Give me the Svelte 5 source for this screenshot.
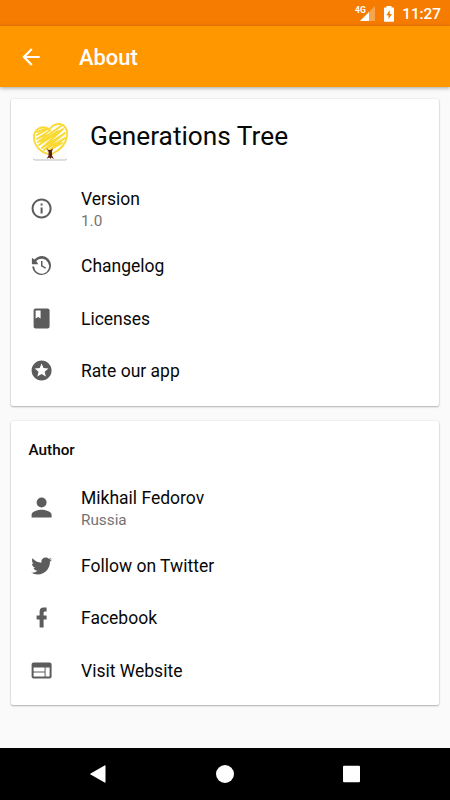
<script lang="ts">
  type Item = {
    icon: string;
    title: string;
    subtitle?: string;
  };

  const icons: Record<string, string> = {
    info: "M11 17h2v-6h-2v6zm1-15C6.48 2 2 6.48 2 12s4.48 10 10 10 10-4.48 10-10S17.52 2 12 2zm0 18c-4.41 0-8-3.59-8-8s3.59-8 8-8 8 3.59 8 8-3.59 8-8 8zM11 9h2V7h-2v2z",
    history:
      "M12.500 2.500a9.300 9.300 0 0 0-7.400 3.600L2.300 4.400v6.400h6.400L6.600 7.600a7.500 7.500 0 1 1-2.100 5.400H2.500A9.500 9.500 0 1 0 12.500 2.500zM11.400 7.500v5.300l4.300 2.500.7-1.200-3.500-2.100V7.500z",
    book: "M18 2H6c-1.1 0-2 .9-2 2v16c0 1.1.9 2 2 2h12c1.1 0 2-.9 2-2V4c0-1.1-.9-2-2-2zM6 4h5v8l-2.5-1.5L6 12V4z",
    stars:
      "M11.99 2C6.47 2 2 6.48 2 12s4.47 10 9.99 10C17.52 22 22 17.52 22 12S17.52 2 11.99 2zm4.24 16L12 15.45 7.77 18l1.12-4.81-3.73-3.23 4.92-.42L12 5l1.92 4.53 4.92.42-3.73 3.23L16.23 18z",
    person:
      "M12 12a5 5 0 1 0 0-10 5 5 0 0 0 0 10zm0 2.3c-3.4 0-10 1.7-10 5V22h20v-2.7c0-3.3-6.6-5-10-5z",
    twitter:
      "M22.46 6c-.77.35-1.6.58-2.46.69.88-.53 1.56-1.37 1.88-2.38-.83.5-1.75.85-2.72 1.05C18.37 4.5 17.26 4 16 4c-2.35 0-4.27 1.92-4.27 4.29 0 .34.04.67.11.98C8.28 9.09 5.11 7.38 3 4.79c-.37.63-.58 1.37-.58 2.15 0 1.49.75 2.81 1.91 3.56-.71 0-1.37-.2-1.95-.5v.03c0 2.08 1.48 3.82 3.44 4.21a4.22 4.22 0 0 1-1.93.07 4.28 4.28 0 0 0 4 2.98 8.521 8.521 0 0 1-5.33 1.84c-.34 0-.68-.02-1.02-.06C3.44 20.29 5.7 21 8.12 21 16 21 20.33 14.46 20.33 8.79c0-.19 0-.37-.01-.56.84-.6 1.56-1.36 2.14-2.23z",
    facebook:
      "M17 2v4h-2c-.69 0-1 .81-1 1.5V10h3v4h-3v8h-4v-8H7v-4h3V6a4 4 0 0 1 4-4h3z",
    web: "M20 4H4c-1.1 0-1.99.9-1.99 2L2 18c0 1.1.9 2 2 2h16c1.1 0 2-.9 2-2V6c0-1.1-.9-2-2-2zm-5 14H4v-4h11v4zm0-5H4V9h11v4zm5 5h-4V9h4v9z",
  };

  const appItems: Item[] = [
    { icon: "info", title: "Version", subtitle: "1.0" },
    { icon: "history", title: "Changelog" },
    { icon: "book", title: "Licenses" },
    { icon: "stars", title: "Rate our app" },
  ];

  const authorItems: Item[] = [
    { icon: "person", title: "Mikhail Fedorov", subtitle: "Russia" },
    { icon: "twitter", title: "Follow on Twitter" },
    { icon: "facebook", title: "Facebook" },
    { icon: "web", title: "Visit Website" },
  ];
</script>

{#snippet row(item: Item)}
  <div class="row" class:tall={item.subtitle}>
    <svg class="row-icon" viewBox="0.4 0.5 24 24" aria-hidden="true">
      <path d={icons[item.icon]} />
    </svg>
    <div class="row-text">
      <div class="row-title">{item.title}</div>
      {#if item.subtitle}
        <div class="row-subtitle">{item.subtitle}</div>
      {/if}
    </div>
  </div>
{/snippet}

<div class="screen">
  <div class="status-bar">
    <svg class="signal" viewBox="0 0 22 18" aria-hidden="true">
      <path d="M21 1v15H6z" fill="#fff" fill-opacity="0.3" />
      <path d="M15 7v9H6z" fill="#fff" />
      <text x="1" y="7.500">4G</text>
    </svg>
    <svg class="battery" viewBox="0 0 12 16" aria-hidden="true">
      <path d="M3.500 0h5v1.500h1.500c.6 0 1 .4 1 1v12.300c0 .6-.4 1-1 1H2c-.6 0-1-.4-1-1V2.500c0-.6.4-1 1-1h1.500z" fill="#fff" />
      <path d="M6.700 4 3.300 9.300h2.200v4l3.400-5.200H6.700z" fill="#f57c00" />
    </svg>
    <span class="clock">11:27</span>
  </div>

  <header class="toolbar">
    <svg class="back" viewBox="0 0 24 24" aria-hidden="true">
      <path d="M20 11H7.830l5.590-5.590L12 4l-8 8 8 8 1.410-1.410L7.830 13H20v-2z" />
    </svg>
    <h1>About</h1>
  </header>

  <main>
    <section class="card">
      <div class="app-head">
        <svg class="logo" viewBox="0 0 40 42" aria-hidden="true">
          <rect class="tile" x="3" y="5" width="34" height="33.500" rx="2" />
          <g fill="none" stroke="#f9da35" stroke-linecap="round" stroke-linejoin="round">
            <path
              d="M20 10c-2-4-8-5-12-2C3 11 3 19 6 24c3 5 8 8 12 9M19 10c2-5 6-7 10-7 5 0 9 5 8 12-1 8-7 14-15 18"
              stroke-width="1.800"
            />
            <path
              d="M7 11l8-3M7 14l11-6M7 18l11-7M8 21l13-9 10-7M9 24L33 8 12 27 35 12 14 29 35 17 18 30l14-8M9 17l7-3M11 21l17-11"
              stroke-width="1.900"
            />
          </g>
          <path
            d="M16.500 27l2.100 2 2 .1 2.500-1.700-1.200 3.200.2 4.200 1.800 3.200-2.700-1.500-.9 1.600-.9-1.600-2.800 1.200 1.900-3 .1-3.900z"
            fill="#5a2110"
          />
        </svg>
        <h2>Generations Tree</h2>
      </div>
      {#each appItems as item}
        {@render row(item)}
      {/each}
    </section>

    <section class="card">
      <h3>Author</h3>
      {#each authorItems as item}
        {@render row(item)}
      {/each}
    </section>
  </main>

  <nav class="nav-bar">
    <svg viewBox="0 0 20 20" aria-hidden="true">
      <path d="M17.500 1.800v16.400c0 .5-.4.700-.9.400L2.600 10.600c-.5-.3-.5-.9 0-1.200L16.600 1.400c.5-.3.900-.1.900.4z" />
    </svg>
    <svg viewBox="0 0 20 20" aria-hidden="true"><circle cx="10" cy="10" r="9" /></svg>
    <svg viewBox="0 0 20 20" aria-hidden="true">
      <rect x="1" y="1.700" width="17" height="16.600" rx="1" />
    </svg>
  </nav>
</div>

<style>
  :global(body) {
    background: #fafafa;
  }

  .screen {
    display: flex;
    flex-direction: column;
    width: 450px;
    height: 800px;
    overflow: hidden;
    background: #fafafa;
    color: #080808;
    font-family: Roboto, sans-serif;
  }

  h1,
  h2,
  h3 {
    margin: 0;
  }

  .status-bar {
    flex: none;
    display: flex;
    align-items: center;
    height: 26px;
    box-sizing: border-box;
    padding: 1px 9px 0 0;
    justify-content: flex-end;
    background: #f57c00;
    color: #fff;
  }

  .signal {
    width: 22px;
    height: 18px;
    margin-right: 7px;
  }

  .signal text {
    fill: #fff;
    font-family: Roboto, sans-serif;
    font-size: 8.5px;
    font-weight: 700;
  }

  .battery {
    width: 12px;
    height: 16px;
    margin-right: 7px;
  }

  .clock {
    font-size: 15.3px;
    font-weight: 500;
    line-height: 26px;
  }

  .toolbar {
    flex: none;
    display: flex;
    align-items: center;
    height: 61px;
    box-sizing: border-box;
    padding-left: 18px;
    background: #ff9800;
    color: #fff;
    box-shadow: 0 1px 4px rgba(0, 0, 0, 0.36);
  }

  .back {
    width: 26px;
    height: 26px;
    margin-right: 35px;
    fill: #fff;
  }

  h1 {
    padding-top: 3px;
    font-size: 21.9px;
    font-weight: 500;
    line-height: 26px;
  }

  main {
    flex: 1;
    display: flex;
    flex-direction: column;
    gap: 15px;
    padding: 12px 11px 0;
  }

  .card {
    box-sizing: border-box;
    padding-bottom: 8px;
    border-radius: 2px;
    background: #fff;
    box-shadow:
      0 1px 2px rgba(0, 0, 0, 0.28),
      0 0 2px rgba(0, 0, 0, 0.12);
  }

  .app-head {
    display: flex;
    height: 78px;
  }

  .logo {
    width: 40px;
    height: 42px;
    margin: 22px 20px 0 19px;
  }

  .tile {
    fill: #fdfdfd;
    filter: drop-shadow(0 1px 0.5px rgba(0, 0, 0, 0.25));
  }

  h2 {
    margin-top: 21px;
    font-size: 26.25px;
    font-weight: 400;
    line-height: 32px;
  }

  h3 {
    height: 56px;
    box-sizing: border-box;
    padding: 19px 0 0 17.5px;
    font-size: 15.3px;
    font-weight: 500;
    line-height: 20px;
  }

  .row {
    display: flex;
    align-items: center;
    height: 52.5px;
    padding-left: 18.5px;
  }

  .row.tall {
    height: 63px;
  }

  .tall .row-text {
    padding-top: 2.5px;
  }

  .row-icon {
    width: 24px;
    height: 24px;
    margin-right: 27.5px;
    fill: #5c5c5c;
  }

  .row-title {
    font-size: 17.5px;
    line-height: 22px;
  }

  .row-subtitle {
    color: #737373;
    font-size: 15.3px;
    line-height: 22px;
  }

  .nav-bar {
    flex: none;
    display: flex;
    align-items: center;
    justify-content: center;
    gap: 107px;
    height: 52px;
    background: #000;
  }

  .nav-bar svg {
    width: 20px;
    height: 20px;
    fill: #fff;
  }
</style>
